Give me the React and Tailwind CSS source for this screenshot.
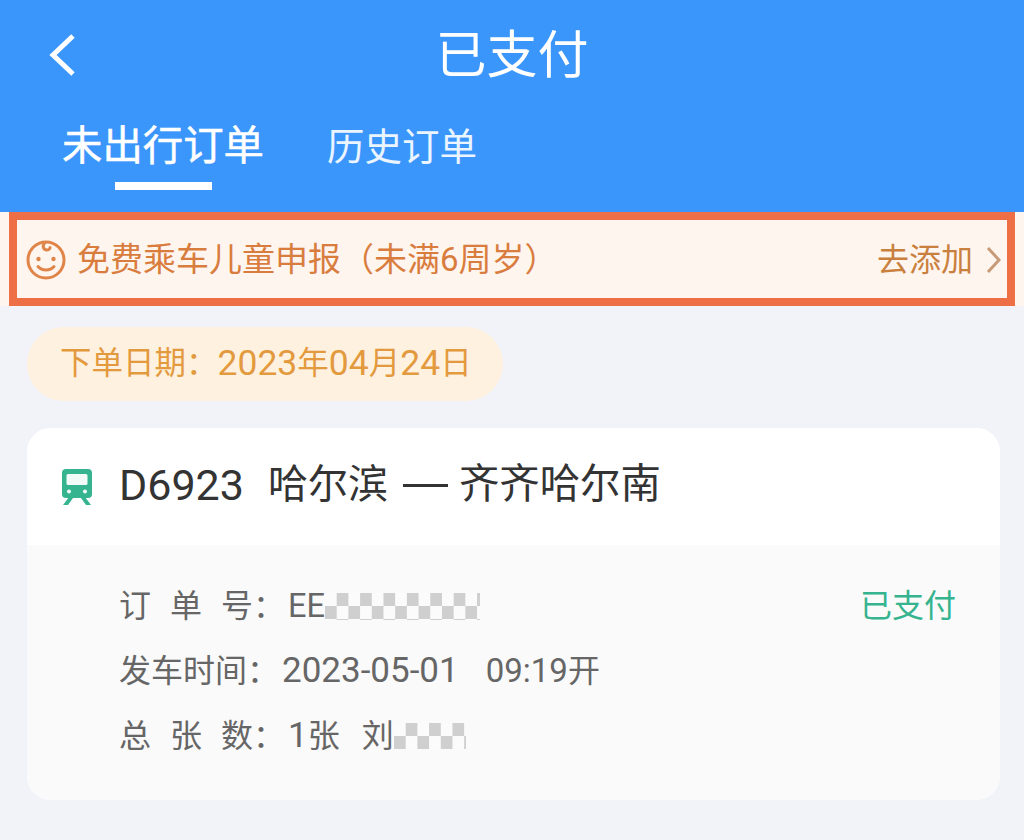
const FONT = "font-['Roboto','Noto_Sans_CJK_SC',sans-serif]";

function Checker({ className }) {
  return (
    <span
      className={`inline-block bg-[repeating-conic-gradient(#cfcfcf_0_25%,#fbfbfb_0_50%)] bg-[length:23.4px_26px] blur-[0.5px] ${className}`}
    />
  );
}

function Face() {
  return (
    <svg width="40" height="40" viewBox="0 0 40 40" fill="none" stroke="#e0854a" strokeWidth="3" strokeLinecap="round" className="shrink-0">
      <circle cx="20" cy="20" r="18" />
      <path d="M19 2.5c-3 3-2 7 1.5 7.5 2 .2 3.5-1 3.5-2.6" />
      <circle cx="12.5" cy="19" r="2.2" fill="#e0854a" stroke="none" />
      <circle cx="27.5" cy="19" r="2.2" fill="#e0854a" stroke="none" />
      <path d="M12 26.5c4 4.5 12 4.5 16 0" />
    </svg>
  );
}

function Train() {
  return (
    <svg width="32" height="38" viewBox="0 0 32 38" className="shrink-0">
      <path d="M5 1h22a4 4 0 0 1 4 4v21a4 4 0 0 1-4 4H5a4 4 0 0 1-4-4V5a4 4 0 0 1 4-4z" fill="#35b48f" />
      <rect x="5.5" y="6" width="21" height="11" rx="1.5" fill="#f3fbf8" />
      <circle cx="8" cy="23.5" r="2" fill="#f3fbf8" />
      <circle cx="24" cy="23.5" r="2" fill="#f3fbf8" />
      <path d="M8 29 2 37h5l5-7M24 29l6 8h-5l-5-7" fill="#35b48f" />
    </svg>
  );
}

export default function App() {
  return (
    <div className={`w-[1024px] h-[840px] overflow-hidden bg-[#f2f3f8] ${FONT}`}>
      <header className="h-[212px] bg-[#3b96fb] text-white flex flex-col">
        <div className="relative h-[122px] pb-[12px] flex items-center justify-center">
          <svg width="30" height="42" viewBox="0 0 30 42" fill="none" stroke="#ffffff" strokeWidth="5" className="absolute left-[48px] top-[34px]">
            <path d="M25 2 5 21l20 19" />
          </svg>
          <span className="text-[51px] leading-none font-normal">已支付</span>
        </div>
        <div className="flex items-start pl-[62px] gap-[63px]">
          <div className="flex flex-col items-center">
            <span className="text-[40.4px] leading-[50px] font-normal [-webkit-text-stroke:0.5px_#ffffff]">未出行订单</span>
            <span className="mt-[10px] ml-[1px] w-[97px] h-[8px] bg-white" />
          </div>
          <span className="text-[37.5px] leading-[50px] text-white/90">历史订单</span>
        </div>
      </header>

      <div className="h-[94px] bg-[#fff5ef] px-[9px]">
        <div className="h-full border-[8px] border-[#ee6f45] flex items-center pt-[2px] pl-[9px] pr-[5px]">
          <Face />
          <span className="ml-[11px] text-[33px] text-[#d97d3e] whitespace-nowrap">免费乘车儿童申报（未满6周岁）</span>
          <span className="ml-auto text-[32px] text-[#c9803f]">去添加</span>
          <svg width="16" height="28" viewBox="0 0 16 28" fill="none" stroke="#c79a78" strokeWidth="3" className="ml-[13px]">
            <path d="M2 2l11 12L2 26" />
          </svg>
        </div>
      </div>

      <div className="px-[27px] pt-[21px]">
        <div className="w-[476px] h-[74px] rounded-[37px] bg-[#fff1df] flex items-center pl-[33px] text-[31.5px] text-[#e39a3e] whitespace-nowrap">
          下单日期：<span className="text-[35.5px]">2023</span>年<span className="text-[35.5px]">04</span>月<span className="text-[35.5px]">24</span>日
        </div>

        <div className="mt-[27px] w-[973px] h-[372px] rounded-[24px] overflow-hidden bg-white flex flex-col">
          <div className="h-[117px] flex items-center pl-[34px] pb-[3px] bg-white text-[#333333] whitespace-nowrap">
            <span className="mt-[3px] flex"><Train /></span>
            <span className="ml-[26px] text-[43px] font-normal leading-none">D6923</span>
            <span className="ml-[24px] text-[40px] leading-none">哈尔滨</span>
            <span className="ml-[15px] w-[45px] h-[3px] bg-[#333333]" />
            <span className="ml-[11px] text-[40.4px] leading-none">齐齐哈尔南</span>
          </div>
          <div className="flex-1 bg-[#fafafa] pl-[92px] pr-[44px] pt-[37px] text-[32px] text-[#666666] leading-[48px] flex flex-col gap-[17px]">
            <div className="flex items-center h-[48px]">
              <span className="w-[169px] flex whitespace-nowrap"><span className="w-[51px]">订</span><span className="w-[51px]">单</span><span>号：</span></span>
              <span className="text-[32.5px]">EE</span>
              <Checker className="w-[155px] h-[27px]" />
              <span className="ml-auto text-[#35b48f]">已支付</span>
            </div>
            <div className="flex items-center h-[48px] whitespace-nowrap">
              <span className="w-[163px]">发车时间：</span>
              <span className="text-[35px]">2023-05-01</span>
              <span className="ml-[27px] text-[33px]">09:19</span>
              <span>开</span>
            </div>
            <div className="flex items-center h-[48px] whitespace-nowrap">
              <span className="w-[169px] flex"><span className="w-[51px]">总</span><span className="w-[51px]">张</span><span>数：</span></span>
              <span className="text-[35px]">1</span>
              <span>张</span>
              <span className="ml-[22px]">刘</span>
              <Checker className="w-[72px] h-[26px]" />
            </div>
          </div>
        </div>
      </div>
    </div>
  );
}
